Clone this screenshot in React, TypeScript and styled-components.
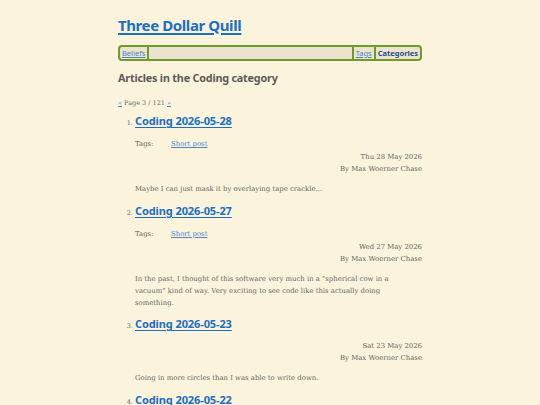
import React from 'react';
import styled, { createGlobalStyle } from 'styled-components';

const GlobalStyle = createGlobalStyle`
  html, body {
    margin: 0;
    padding: 0;
    background: #fbf3dc;
  }
  body {
    font-family: 'DejaVu Serif', 'Liberation Serif', serif;
    color: #666663;
  }
`;

const Page = styled.div`
  width: 304px;
  margin: 0 auto;
  padding-top: 14px;
`;

const SiteTitle = styled.a`
  display: block;
  font-family: 'Noto Sans', 'Open Sans', sans-serif;
  font-size: 15px;
  font-weight: 700;
  letter-spacing: -0.4px;
  line-height: 22px;
  color: #1b6fc2;
  text-decoration: underline;
  text-decoration-thickness: 2px;
  text-underline-offset: 2px;
`;

const Nav = styled.nav`
  display: flex;
  align-items: stretch;
  margin-top: 9px;
  height: 12px;
  border: 2px solid #6c9c2c;
  border-radius: 4px;
  background: #ebe3cd;
  font-family: 'Noto Sans', 'Open Sans', sans-serif;
  font-size: 7.5px;
  line-height: 12px;
`;

const NavLink = styled.a<{ $active?: boolean; $sep?: 'left' | 'right' }>`
  padding: 0 2px;
  color: ${(p) => (p.$active ? '#1f4f8c' : '#4d86c6')};
  font-weight: ${(p) => (p.$active ? 700 : 400)};
  text-decoration: ${(p) => (p.$active ? 'none' : 'underline')};
  border-left: ${(p) => (p.$sep === 'left' ? '2px solid #6c9c2c' : 'none')};
  border-right: ${(p) => (p.$sep === 'right' ? '2px solid #6c9c2c' : 'none')};
`;

const NavFill = styled.div`
  flex: 1;
`;

const Heading = styled.h1`
  margin: 9px 0 0;
  font-family: 'Noto Sans', 'Open Sans', sans-serif;
  font-size: 10.8px;
  font-weight: 700;
  letter-spacing: -0.2px;
  line-height: 16px;
  color: #5b5b58;
`;

const Pager = styled.div`
  margin-top: 12px;
  font-size: 6.5px;
  line-height: 10px;
  color: #6a6a66;
`;

const PagerLink = styled.a`
  color: #4d86c6;
  text-decoration: underline;
`;

const List = styled.ol`
  margin: 5px 0 0;
  padding-left: 17px;
  font-size: 6.9px;
  color: #666663;
`;

const Item = styled.li`
  margin-bottom: 7.5px;
  &::marker {
    font-size: 6.5px;
  }
`;

const PostTitle = styled.a`
  font-family: 'Noto Sans', 'Open Sans', sans-serif;
  font-size: 11px;
  font-weight: 700;
  letter-spacing: -0.1px;
  line-height: 16px;
  color: #1b6fc2;
  text-decoration: underline;
  text-decoration-thickness: 1px;
  text-underline-offset: 1.5px;
`;

const Tags = styled.div`
  display: flex;
  margin-top: 9px;
  line-height: 12px;
`;

const TagLabel = styled.span`
  width: 36px;
`;

const TagLink = styled.a`
  color: #4d86c6;
  text-decoration: underline;
`;

// date sits right under the tags, or under the title when a post has none
const Meta = styled.div<{ $gap: number }>`
  margin-top: ${(p) => p.$gap}px;
  text-align: right;
  line-height: 12px;
`;

const Summary = styled.p`
  margin: 8px 0 0;
  line-height: 12px;
  padding-right: 24px;
`;

type Post = { title: string; date: string; tags: string[]; summary: string };

const posts: Post[] = [
  {
    title: 'Coding 2026-05-28',
    date: 'Thu 28 May 2026',
    tags: ['Short post'],
    summary: 'Maybe I can just mask it by overlaying tape crackle...',
  },
  {
    title: 'Coding 2026-05-27',
    date: 'Wed 27 May 2026',
    tags: ['Short post'],
    summary:
      'In the past, I thought of this software very much in a "spherical cow in a vacuum" kind of way. Very exciting to see code like this actually doing something.',
  },
  {
    title: 'Coding 2026-05-23',
    date: 'Sat 23 May 2026',
    tags: [],
    summary: 'Going in more circles than I was able to write down.',
  },
  {
    title: 'Coding 2026-05-22',
    date: 'Fri 22 May 2026',
    tags: ['Short post'],
    summary: 'More work.',
  },
];

const App = (): JSX.Element => (
  <>
    <GlobalStyle />
    <Page>
      <SiteTitle href="#">Three Dollar Quill</SiteTitle>
      <Nav>
        <NavLink href="#" $sep="right">Beliefs</NavLink>
        <NavFill />
        <NavLink href="#" $sep="left">Tags</NavLink>
        <NavLink href="#" $active $sep="left">Categories</NavLink>
      </Nav>
      <Heading>Articles in the Coding category</Heading>
      <Pager>
        <PagerLink href="#">«</PagerLink> Page 3 / 121 <PagerLink href="#">»</PagerLink>
      </Pager>
      <List>
        {posts.map((post) => (
          <Item key={post.title}>
            <PostTitle href="#">{post.title}</PostTitle>
            {post.tags.length > 0 && (
              <Tags>
                <TagLabel>Tags:</TagLabel>
                {post.tags.map((t) => (
                  <TagLink key={t} href="#">{t}</TagLink>
                ))}
              </Tags>
            )}
            <Meta $gap={post.tags.length === 0 ? 8 : 1}>{post.date}</Meta>
            <Meta $gap={0}>By Max Woerner Chase</Meta>
            <Summary>{post.summary}</Summary>
          </Item>
        ))}
      </List>
    </Page>
  </>
);

export default App;
